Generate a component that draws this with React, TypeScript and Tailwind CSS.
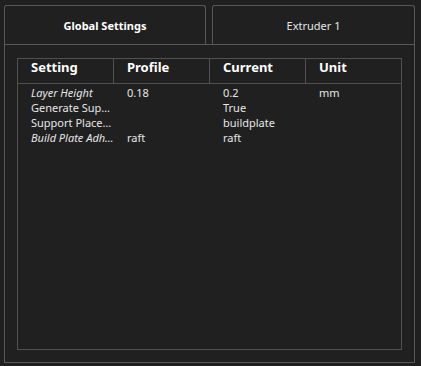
import React from "react";

const rows = [
  { s: "Layer Height", italic: true, p: "0.18", c: "0.2", u: "mm" },
  { s: "Generate Sup…", italic: false, p: "", c: "True", u: "" },
  { s: "Support Place…", italic: false, p: "", c: "buildplate", u: "" },
  { s: "Build Plate Adh…", italic: true, p: "raft", c: "raft", u: "" },
];

export default function App() {
  return (
    <div
      className="w-[421px] h-[366px] bg-[#202020] pl-[4px] pr-[6px] pt-[5px] pb-[3px] flex flex-col text-[#e6e6e6]"
      style={{ fontFamily: '"Noto Sans", "Open Sans", sans-serif' }}
    >
      <div className="flex h-[39px] gap-[6px] shrink-0">
        <div className="w-[202px] border-t border-l border-r border-[#585858] rounded-t-[3px] flex items-center justify-center pt-[2px] text-[11px] font-bold text-white">
          Global Settings
        </div>
        <div className="flex-1 border-t border-l border-r border-[#585858] rounded-t-[3px] flex items-center justify-center pt-[2px] text-[11px] text-[#e6e6e6]">
          Extruder 1
        </div>
      </div>
      <div className="flex-1 border border-[#585858] pt-[13px] px-[12px] pb-[12px] flex flex-col">
        <div className="flex-1 flex flex-col">
          <div className="flex h-[26px] border-t border-b border-l border-[#505050] shrink-0">
            {["Setting", "Profile", "Current", "Unit"].map((h, i) => (
              <div
                key={h}
                className={`${i === 3 ? "flex-1" : "w-[96px]"} border-r border-[#505050] pl-[13px] text-[13px] font-bold text-white leading-[17px]`}
              >
                {h}
              </div>
            ))}
          </div>
          <div className="flex-1 border-l border-r border-b border-[#505050] pt-[1px]">
            {rows.map((r) => (
              <div key={r.s} className="flex h-[15px] text-[11px] leading-[15px]">
                <div className={`w-[96px] pl-[13px] ${r.italic ? "italic" : ""}`}>{r.s}</div>
                <div className="w-[96px] pl-[13px]">{r.p}</div>
                <div className="w-[96px] pl-[13px]">{r.c}</div>
                <div className="flex-1 pl-[13px]">{r.u}</div>
              </div>
            ))}
          </div>
        </div>
      </div>
    </div>
  );
}
